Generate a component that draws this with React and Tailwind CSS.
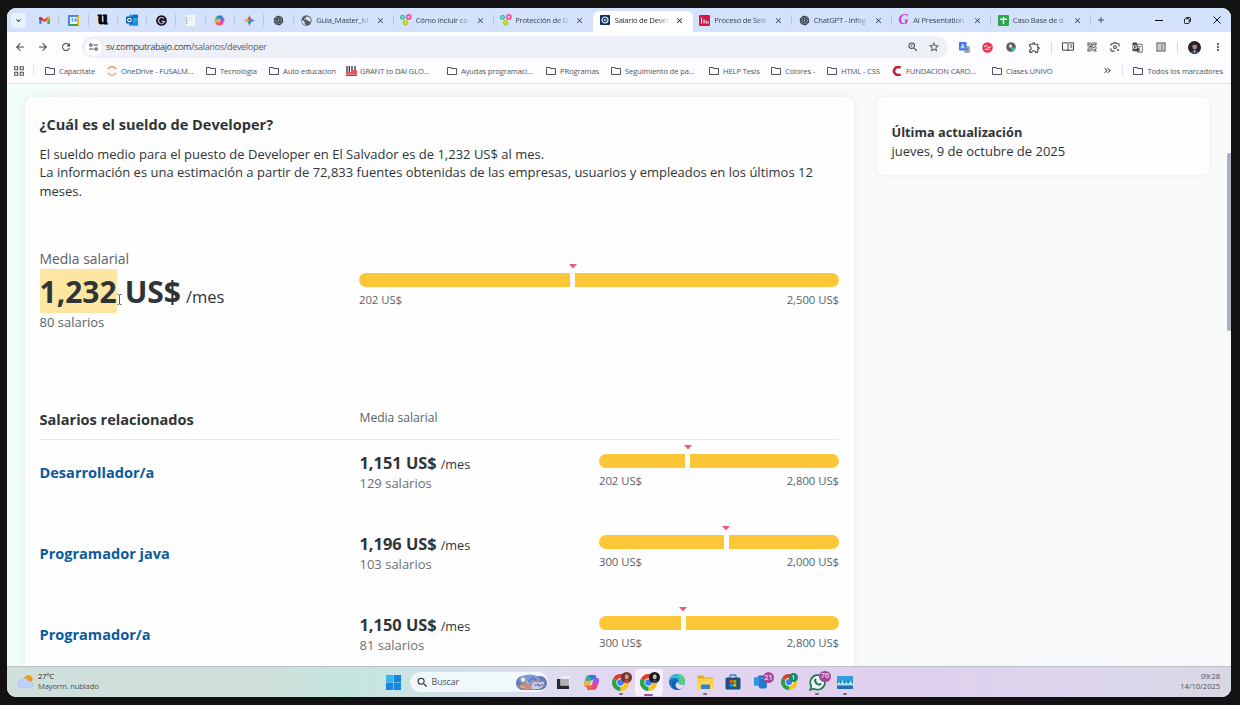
import React from "react";
import {
  MdArrowBack, MdArrowForward, MdRefresh, MdZoomIn, MdStarBorder, MdOutlineExtension,
  MdOutlineFolder, MdQrCode2, MdGTranslate, MdOutlineListAlt, MdMoreVert, MdClose, MdAdd,
  MdKeyboardArrowDown, MdKeyboardDoubleArrowRight, MdSearch,
} from "react-icons/md";
import { RiOpenaiFill } from "react-icons/ri";

/* ---------- favicons ---------- */
const Gmail = () => (
  <svg viewBox="0 0 24 18" className="h-[8px] w-[11px]">
    <path d="M0 2v14a2 2 0 0 0 2 2h3.500V6z" fill="#4285f4" />
    <path d="M24 2v14a2 2 0 0 1-2 2h-3.500V6z" fill="#34a853" />
    <path d="M2 3 12 11 22 3" fill="none" stroke="#ea4335" strokeWidth="5" />
    <path d="M18.500 4 24 2v5l-5.500 4z" fill="#fbbc04" />
    <path d="M0 2l5.500 4v5L0 7z" fill="#c5221f" />
  </svg>
);
const Calendar = () => (
  <span className="flex h-[11px] w-[11px] items-center justify-center border-2 border-t-[#4285f4] border-r-[#fbbc04] border-b-[#34a853] border-l-[#4285f4] bg-white text-[6px] font-bold leading-none tracking-[-0.3px] text-[#4285f4]">14</span>
);
const UdemyU = () => <span className="-mt-[4px] font-['Liberation_Serif',serif] text-[18px] font-bold leading-none text-black [-webkit-text-stroke:0.900px_black]">u</span>;
const Outlook = () => (
  <svg viewBox="0 0 12 12" className="h-[12px] w-[12px]">
    <rect x="3" y="0.500" width="9" height="11" rx="1" fill="#28a8ea" />
    <path d="M3 6l4.500 3L12 6v5.500H3z" fill="#1490df" />
    <path d="M7 1h5v3H7z" fill="#0b68b8" />
    <rect y="2.500" width="7" height="7" rx="0.800" fill="#0f5fa8" />
    <circle cx="3.500" cy="6" r="1.800" fill="none" stroke="#fff" strokeWidth="1.100" />
  </svg>
);
const DarkG = () => (
  <svg viewBox="0 0 12 12" className="h-[11px] w-[11px]">
    <circle cx="6" cy="6" r="5.800" fill="#15131f" />
    <path d="M8.600 3.900A3.300 3.300 0 1 0 9.200 7H6.300" fill="none" stroke="#e6b8d8" strokeWidth="1.300" />
    <path d="M4 9.300a4 4 0 0 0 5-1.500" stroke="#5a8cf0" strokeWidth="1" fill="none" />
  </svg>
);
const Doc = () => (
  <svg viewBox="0 0 10 12" className="h-[11px] w-[9px]">
    <rect width="10" height="12" fill="#f5f8fa" />
    <path d="M0 2h1.500v8H0z" fill="#a6cdb8" />
    <path d="M3 3h4M3 6h5" stroke="#d5dde4" />
  </svg>
);
const Copilot = ({ className }) => (
  <svg viewBox="0 0 16 16" className={className}>
    <path d="M6 1h4.500c1 0 1.500.7 1.800 1.700L13 5H9.500C8 5 7.600 6 7.200 7.300L5.700 12H3C.8 12 .6 10 1.200 8L2.800 3.500C3.500 1.800 4.400 1 6 1z" fill="#1f9be8" />
    <path d="M1.200 8C.6 10 .8 12 3 12h2.700l1.500-4.700.3-1.300L2 6z" fill="#f2b632" />
    <path d="M2.800 3.500 2 6h5.600C8 5.300 8.700 5 9.500 5L8 1H6c-1.600 0-2.500.8-3.200 2.500z" fill="#36b37e" />
    <path d="M6.500 1h4c1 0 1.500.7 1.800 1.700L13 5H9.500C8.500 5 8 5.500 7.600 6z" fill="#2a78e4" />
    <path d="M10 15H5.500c-1 0-1.500-.7-1.800-1.700L3 11h3.500c1.500 0 1.900-1 2.300-2.300L10.300 4H13c2.200 0 2.400 2 1.800 4l-1.600 4.500C12.500 14.200 11.600 15 10 15z" fill="#e8489a" />
    <path d="M14.800 8c.6-2 .4-4-1.800-4h-2.700L9 8z" fill="#8b5cf6" />
    <path d="M3 11h3.500c1 0 1.500-.5 1.800-1l1.500 5H5.500c-1 0-1.500-.7-1.800-1.700z" fill="#f2643d" />
  </svg>
);
const Gemini = () => (
  <svg viewBox="0 0 12 12" className="h-[11px] w-[11px]">
    <path d="M6 0c.6 3.300 2.700 5.400 6 6-3.300.6-5.400 2.700-6 6-.6-3.300-2.700-5.400-6-6 3.300-.6 5.400-2.700 6-6z" fill="#3f86f4" />
    <path d="M6 0c.3 2 1 3.300 2 4.300L6 5.500 4 4.300C5 3.300 5.700 2 6 0z" fill="#ea5146" />
    <path d="M0 6c2-.3 3.300-1 4.300-2L5.500 6 4.300 8C3.300 7 2 6.300 0 6z" fill="#e9b62d" />
    <path d="M6 12c-.3-2-1-3.300-2-4.300L5.500 7 7 8.500C6.500 9.300 6.200 10.500 6 12z" fill="#35a463" />
  </svg>
);
const Bubbles = () => (
  <svg viewBox="0 0 12 12" className="h-[12px] w-[12px]">
    <circle cx="2.500" cy="3.200" r="1.900" fill="#8fd6cc" stroke="#35b9ac" strokeWidth="1.200" />
    <circle cx="8.800" cy="2.900" r="2.200" fill="#f6b0d4" stroke="#ec4aa0" strokeWidth="1.500" />
    <circle cx="5.500" cy="8.700" r="2.500" fill="#a8cc2e" stroke="#b5d334" />
    <circle cx="5.500" cy="8.500" r="0.900" fill="#e4f0a8" />
  </svg>
);
const Computrabajo = () => (
  <svg viewBox="0 0 10 10" className="h-[10px] w-[10px]">
    <rect width="10" height="10" rx="1" fill="#0b2f63" />
    <circle cx="5" cy="5" r="3" fill="none" stroke="#e8eef6" strokeWidth="1.200" />
    <path d="M4.300 3.800v2.500M5.800 3.800v2.500" stroke="#e8eef6" strokeWidth="0.900" />
  </svg>
);
const RedBars = () => (
  <svg viewBox="0 0 11 11" className="h-[11px] w-[11px]">
    <rect width="11" height="11" rx="1" fill="#d3174c" />
    <path d="M2.500 2.500v6M5 4.500v4M7.200 5.500v3M9 6.500v2" stroke="#fff" strokeWidth="1.100" />
  </svg>
);
const PinkG = () => <span className="font-['Liberation_Serif',serif] text-[14px] font-bold italic leading-none text-[#cf36e0]">G</span>;
const Sheets = () => (
  <svg viewBox="0 0 11 11" className="h-[11px] w-[11px]">
    <rect width="11" height="11" rx="1" fill="#2da44e" />
    <path d="M2 4.200h7M5.500 2v7.200" stroke="#fff" strokeWidth="1.400" />
  </svg>
);
const Gpt = () => <RiOpenaiFill className="h-[11px] w-[11px] text-[#1f2429] [stroke-width:0.800px]" stroke="currentColor" />;
const Globe = () => (
  <svg viewBox="0 0 12 12" className="h-[11px] w-[11px]">
    <circle cx="6" cy="6" r="5.600" fill="#555b63" />
    <path d="M1.500 5.500 4 7.500v2l1.500 1.500C3 10.800 1 9 1 6.500zM6 1.500 5 3.500H3.800L3.500 5h3l1 1.500H9L10.500 8c.6-2.500 0-4.500-2-5.800z" fill="#dce6f8" />
  </svg>
);

const pinned = [Gmail, Calendar, UdemyU, Outlook, DarkG, Doc, () => <Copilot className="h-[11px] w-[11px]" />, Gemini, Gpt];
const tabs = [
  { Icon: Globe, title: "Guia_Master_M" },
  { Icon: Bubbles, title: "Cómo incluir co" },
  { Icon: Bubbles, title: "Protección de D" },
  { Icon: Computrabajo, title: "Salario de Devel", active: true },
  { Icon: RedBars, title: "Proceso de Sele" },
  { Icon: Gpt, title: "ChatGPT - Infog" },
  { Icon: PinkG, title: "AI Presentation" },
  { Icon: Sheets, title: "Caso Base de d" },
];

function TabStrip() {
  return (
    <div className="flex h-[24px] shrink-0 items-center bg-[#d4e1fb] text-[#3c4654]">
      <div className="ml-[4px] flex h-[15px] w-[15px] items-center justify-center rounded-[4px] bg-[#e8f3fb]">
        <MdKeyboardArrowDown className="h-[9px] w-[9px] text-black" />
      </div>
      <div className="ml-[4px] flex">
        {pinned.map((Icon, i) => (
          <div key={i} className="flex h-[12px] w-[29.300px] items-center justify-center border-r border-[#b9c9e4]">
            <Icon />
          </div>
        ))}
      </div>
      <div className="ml-[1px] flex h-full items-center">
        {tabs.map(({ Icon, title, active }, i) => (
          <div
            key={title}
            className={
              active
                ? "mt-[3px] flex h-[21px] w-[99.500px] items-center pb-[3px] rounded-t-[6px] bg-white pl-[6px] text-[#1f2328]"
                : "flex h-full w-[99.500px] items-center pl-[6px]"
            }
          >
            <span className="flex w-[12px] justify-center"><Icon /></span>
            <span className="ml-[3.500px] w-[57px] whitespace-nowrap text-[7.700px] leading-[12px] tracking-[-0.250px] [mask-image:linear-gradient(to_right,black_72%,transparent_98%)]">{title}</span>
            <MdClose className="ml-[3px] h-[9px] w-[9px]" />
            {!active && i !== 2 && <span className="ml-auto h-[10px] w-px bg-[#b2c3df]" />}
          </div>
        ))}
      </div>
      <MdAdd className="ml-[5px] h-[10px] w-[10px]" />
      <div className="ml-auto flex text-black">
        <span className="flex w-[29px] items-center justify-center"><span className="h-px w-[8px] bg-black" /></span>
        <span className="flex w-[29px] items-center justify-center">
          <svg viewBox="0 0 8 8" className="h-[7px] w-[7px]" fill="none" stroke="currentColor"><rect x="0.500" y="2" width="5.500" height="5.500" rx="1" /><path d="M2.500.6h3.700A1.300 1.300 0 0 1 7.500 2v3.500" /></svg>
        </span>
        <span className="flex w-[29px] items-center justify-center">
          <svg viewBox="0 0 8 8" className="h-[8px] w-[8px]" stroke="currentColor" strokeWidth="0.900"><path d="M.5.5l7 7M7.500.5l-7 7" /></svg>
        </span>
      </div>
    </div>
  );
}

const Cell = ({ children }) => <span className="flex w-[23.200px] shrink-0 items-center justify-center">{children}</span>;

function Toolbar() {
  return (
    <div className="flex h-[27px] shrink-0 items-center pt-[3px] text-[#42464c]">
      <div className="flex pl-[1px]">
        <Cell><MdArrowBack className="h-[12px] w-[12px]" /></Cell>
        <Cell><MdArrowForward className="h-[12px] w-[12px]" /></Cell>
        <Cell><MdRefresh className="h-[12px] w-[12px]" /></Cell>
      </div>
      <div className="ml-[4.500px] flex h-[22px] w-[866px] items-center rounded-full bg-[#eef0f8] pl-[3px] pr-[8px]">
        <span className="flex h-[17px] w-[17px] items-center justify-center rounded-full bg-white">
          <svg viewBox="0 0 10 9" className="h-[8px] w-[9px]" fill="none" stroke="currentColor" strokeWidth="1.200"><circle cx="2" cy="2.200" r="1.400" /><path d="M5 2.200h5M0 6.800h5" /><circle cx="8" cy="6.800" r="1.400" /></svg>
        </span>
        <span className="ml-[4px] text-[9px] leading-[14px] tracking-[-0.300px] text-[#3a3f46]">sv.computrabajo.com<span className="text-[#5b6068]">/salarios/developer</span></span>
        <div className="ml-auto flex gap-[9px]">
          <MdZoomIn className="h-[12px] w-[12px]" />
          <MdStarBorder className="h-[12px] w-[12px]" />
        </div>
      </div>
      <div className="ml-[5px] flex items-center">
        <Cell>
          <svg viewBox="0 0 11 11" className="h-[11px] w-[11px]"><rect x="5" y="4" width="6" height="7" rx="1" fill="#a9b0b8" /><rect width="7.500" height="8.500" rx="1" fill="#4079e8" /><path d="M2 6.500 3.700 2l1.700 4.500M2.600 5h2.200" stroke="#fff" fill="none" strokeWidth="0.900" /><path d="M7 7h3M8.500 6v4" stroke="#6f7780" strokeWidth="0.700" /></svg>
        </Cell>
        <Cell>
          <svg viewBox="0 0 11 11" className="h-[11px] w-[11px]"><circle cx="5.500" cy="5.500" r="5.300" fill="#ef3558" /><path d="M2 5.200c1.300-2 2.600-2 3.500-.5s2.400 1.300 3.500-.4M3 7.300h4.500" stroke="#fff" fill="none" /></svg>
        </Cell>
        <Cell>
          <svg viewBox="0 0 11 11" className="h-[10px] w-[10px]"><circle cx="5.500" cy="5.500" r="5.300" fill="#5c6266" /><path d="M5.500 5.500 10.500 7A5.300 5.300 0 0 1 7 10.500z" fill="#42c6a0" /><circle cx="5" cy="4.500" r="1.700" fill="#e4ecec" /></svg>
        </Cell>
        <Cell><MdOutlineExtension className="h-[13px] w-[13px]" /></Cell>
        <span className="mx-[5px] h-[11px] w-px bg-[#c9d9ef]" />
        <Cell>
          <svg viewBox="0 0 12 10" className="h-[10px] w-[12px]" fill="none" stroke="currentColor" strokeWidth="1"><path d="M.5.8h5l.5.6.5-.6h5v7.400h-5L6 9l-.5-.8h-5zM6 1.500V9M8 3h2.300M8 5h2.300" /></svg>
        </Cell>
        <Cell><MdQrCode2 className="h-[12px] w-[12px]" /></Cell>
        <Cell>
          <svg viewBox="0 0 11 11" className="h-[10px] w-[10px]" fill="none" stroke="currentColor" strokeWidth="1.200"><path d="M1 4V3q0-1 1-1h1.300L4 1h3l.7 1H9q1 0 1 1v2M1 7v2q0 1 1 1h3" /><circle cx="5.500" cy="5.700" r="1.500" /><circle cx="8.800" cy="8.800" r="0.500" /></svg>
        </Cell>
        <Cell><MdGTranslate className="h-[11px] w-[11px]" /></Cell>
        <Cell><MdOutlineListAlt className="h-[12px] w-[12px]" /></Cell>
        <span className="mx-[4.500px] h-[11px] w-px bg-[#c9d9ef]" />
        <Cell>
          <svg viewBox="0 0 12 12" className="h-[13px] w-[13px]"><circle cx="6" cy="6" r="6" fill="#24222d" /><ellipse cx="6.200" cy="5" rx="2.100" ry="2.600" fill="#b58a72" /><path d="M3.800 4c.3-2.600 4.500-2.600 4.800 0l-1-.6H5z" fill="#17151c" /><path d="M2.500 10.500c1-2.500 6-2.500 7 0a6 6 0 0 1-7 0z" fill="#3f4c78" /><path d="M5.500 8.500h1.400L6.200 11z" fill="#dfe2ea" /></svg>
        </Cell>
        <Cell><MdMoreVert className="h-[12px] w-[12px]" /></Cell>
      </div>
    </div>
  );
}

const Folder = () => <MdOutlineFolder className="h-[12px] w-[12px] shrink-0" />;
const Ring = () => (
  <svg viewBox="0 0 11 11" className="h-[10px] w-[12px] shrink-0" fill="none" stroke="#e8873a" strokeWidth="1.400"><path d="M1.200 3.500a4.700 4.700 0 0 1 8.600 0" /><path d="M1.200 7.500a4.700 4.700 0 0 0 8.600 0" stroke="#d8a06a" /></svg>
);
const Grant = () => (
  <svg viewBox="0 0 11 10" className="h-[10px] w-[11px] shrink-0"><path d="M1 0v6M3.300 0v6M6 0v4M9 0v4" stroke="#273044" strokeWidth="1.300" /><path d="M5 5h6M0 7h11M0 9.200h11" stroke="#d8222e" strokeWidth="1.400" /></svg>
);
const Carolina = () => (
  <svg viewBox="0 0 10 10" className="h-[10px] w-[12px] shrink-0"><path d="M8.500 1.800A4 4 0 1 0 8.500 8.200" fill="none" stroke="#b8283a" strokeWidth="2.600" /></svg>
);

const bookmarks = [
  { Icon: Folder, label: "Capacitate", w: "w-[62px]" },
  { Icon: Ring, label: "OneDrive - FUSALM...", w: "w-[99px]" },
  { Icon: Folder, label: "Tecnologia", w: "w-[63px]" },
  { Icon: Folder, label: "Auto educacion", w: "w-[78px]" },
  { Icon: Grant, label: "GRANT to DAI GLO...", w: "w-[100px]" },
  { Icon: Folder, label: "Ayudas programaci...", w: "w-[99px]" },
  { Icon: Folder, label: "PRogramas", w: "w-[65px]" },
  { Icon: Folder, label: "Seguimiento de pa...", w: "w-[98px]" },
  { Icon: Folder, label: "HELP Tesis", w: "w-[62px]" },
  { Icon: Folder, label: "Colores -", w: "w-[56px]" },
  { Icon: Folder, label: "HTML - CSS", w: "w-[65px]" },
  { Icon: Carolina, label: "FUNDACION CARO...", w: "w-[100px]" },
  { Icon: Folder, label: "Clases UNIVO", w: "w-[80px]" },
];

function Bookmarks() {
  return (
    <div className="flex h-[25px] shrink-0 items-center border-b border-[#e2e4e9] pb-px text-[7.600px] leading-[12px] tracking-[-0.130px] text-[#50555c]">
      <svg viewBox="0 0 10 10" className="ml-[7px] h-[10px] w-[10px]" fill="none" stroke="currentColor" strokeWidth="1.100"><path d="M.7.700h3v3h-3zM6.300.700h3v3h-3zM.7 6.300h3v3h-3zM6.300 6.300h3v3h-3z" /></svg>
      <span className="ml-[9px] mr-[9.500px] h-[11px] w-px bg-[#dce3ee]" />
      {bookmarks.map(({ Icon, label, w }) => (
        <span key={label} className={"flex shrink-0 items-center gap-[3.500px] whitespace-nowrap " + w}>
          <Icon />
          {label}
        </span>
      ))}
      <MdKeyboardDoubleArrowRight className="ml-auto h-[11px] w-[11px]" />
      <span className="mx-[9px] h-[11px] w-px bg-[#dce3ee]" />
      <span className="mr-[8px] flex items-center gap-[3.500px] whitespace-nowrap"><Folder />Todos los marcadores</span>
    </div>
  );
}

/* ---------- page ---------- */
function Range({ min, max, at, className }) {
  return (
    <div className={className}>
      <div className="flex h-[5px]">
        <svg viewBox="0 0 8 5" className="h-[5px] w-[8px] -translate-x-1/2" style={{ marginLeft: at }}>
          <path d="M0 0h8L4 4.500z" fill="#e8588a" />
        </svg>
      </div>
      <div className="mt-[4px] flex h-[14px] gap-[5px]">
        <div className="rounded-l-full bg-[#fbc638]" style={{ width: `calc(${at} - 2.5px)` }} />
        <div className="flex-1 rounded-r-full bg-[#fbc638]" />
      </div>
      <div className="mt-[4px] flex justify-between text-[11.400px] leading-[17px] tracking-[-0.080px] text-[#5a6268]">
        <span>{min} US$</span>
        <span>{max} US$</span>
      </div>
    </div>
  );
}

const related = [
  { name: "Desarrollador/a", pay: "1,151", count: 129, min: "202", max: "2,800", at: "37%" },
  { name: "Programador java", pay: "1,196", count: 103, min: "300", max: "2,000", at: "53%" },
  { name: "Programador/a", pay: "1,150", count: 81, min: "300", max: "2,800", at: "35%" },
];

function SalaryCard() {
  return (
    <section className="ml-[18px] mt-[13px] h-[620px] w-[829px] shrink-0 rounded-[8px] bg-[#fefefe] pl-[14.500px] pr-[15px] shadow-[0_0_8px_rgba(60,60,110,0.08)]">
      <h1 className="pt-[17px] text-[14.550px] font-bold leading-[20px]">¿Cuál es el sueldo de Developer?</h1>
      <p className="mt-[10.500px] whitespace-nowrap text-[13px] leading-[18.700px]">
        El sueldo medio para el puesto de Developer en El Salvador es de 1,232 US$ al mes.<br />
        La información es una estimación a partir de 72,833 fuentes obtenidas de las empresas, usuarios y empleados en los últimos 12<br />
        meses.
      </p>
      <div className="mt-[48.500px] flex h-[82px]">
        <div className="w-[320px]">
          <div className="text-[13.900px] leading-[20px] text-[#5a6268]">Media salarial</div>
          <div className="flex h-[44px] items-baseline leading-[45px]">
            <span className="relative h-[44px] bg-[#fde6a1] text-[30px] font-bold">1,232
              <svg viewBox="0 0 5 11" className="absolute -right-[5px] top-[25px] h-[11px] w-[5px]" fill="none" stroke="#333" strokeWidth="0.800"><path d="M.5.5h1.300l.7.700.7-.7h1.300M2.500 1v9M.5 10.500h1.300l.7-.7.7.700h1.300" /></svg>
            </span>
            <span className="ml-[8px] text-[30px] font-bold">US$</span>
            <span className="ml-[5px] text-[16.500px]">/mes</span>
          </div>
          <div className="text-[13px] leading-[18px] text-[#5a6268]">80 salarios</div>
        </div>
        <Range min="202" max="2,500" at="44.5%" className="-ml-[0.500px] w-[480px] pt-[15px]" />
      </div>
      <div className="mt-[69px] flex h-[40px] items-center border-b border-[#e6e8ea]">
        <h2 className="w-[320px] pb-px text-[14.550px] font-bold leading-[20px]">Salarios relacionados</h2>
        <span className="pb-[4px] text-[12.100px] leading-[18px] text-[#5a6268]">Media salarial</span>
      </div>
      {related.map((r) => (
        <div key={r.name} className="flex h-[81.200px] pt-[5px]">
          <div className="w-[320px] pt-[17px] text-[14.550px] font-bold leading-[20px] text-[#0a5a9c]">{r.name}</div>
          <div className="w-[239.500px] pt-[7.500px]">
            <div className="leading-[20px]"><span className="text-[16.400px] font-bold">{r.pay} US$</span><span className="ml-[4px] text-[12.700px]">/mes</span></div>
            <div className="text-[13px] leading-[19px] text-[#687076]">{r.count} salarios</div>
          </div>
          <Range min={r.min} max={r.max} at={r.at} className="w-[240px]" />
        </div>
      ))}
    </section>
  );
}

function Page() {
  return (
    <main className="flex min-h-0 flex-1 overflow-hidden bg-[linear-gradient(to_right,#f0fdfb_0,#f8f9fb_90px)] text-[#2f3437]">
      <SalaryCard />
      <aside className="ml-[23px] mt-[13px] h-[78px] w-[332px] rounded-[7px] bg-[#fefefe] pl-[14.500px] pt-[26px] text-[13px] leading-[19px] shadow-[0_0_6px_rgba(60,60,110,0.06)]">
        <div className="text-[12.750px] font-bold">Última actualización</div>
        <div>jueves, 9 de octubre de 2025</div>
      </aside>
      <div className="ml-auto mt-[69px] h-[178px] w-[4px] rounded-l-[2px] bg-[#a9b1c0]" />
    </main>
  );
}

/* ---------- taskbar ---------- */
const Chrome = ({ className = "h-[17px] w-[17px]" }) => (
  <svg viewBox="0 0 18 18" className={className}>
    <path d="M9 9 1.200 4.500A9 9 0 0 1 16.800 4.500z" fill="#e33b2e" />
    <path d="M9 9 16.800 4.500A9 9 0 0 1 9 18z" fill="#fbc116" />
    <path d="M9 9v9A9 9 0 0 1 1.200 4.500z" fill="#2da04a" />
    <circle cx="9" cy="9" r="4.400" fill="#fff" />
    <circle cx="9" cy="9" r="3.500" fill="#3b7ded" />
  </svg>
);
const Face = ({ dark }) => (
  <svg viewBox="0 0 10 10" className="absolute -right-[3px] -top-[2px] h-[11px] w-[11px]">
    <circle cx="5" cy="5" r="5" fill={dark ? "#17161b" : "#6b3a35"} />
    <ellipse cx="5.200" cy="4.300" rx="1.800" ry="2.300" fill={dark ? "#cbb9ae" : "#d69b83"} />
    <path d="M2.500 9c1-2.500 4.500-2.500 5.500 0a5 5 0 0 1-5.500 0z" fill={dark ? "#3a4664" : "#c84848"} />
  </svg>
);
const Badge = ({ children }) => (
  <span className="absolute -right-[5px] -top-[3px] flex h-[11px] min-w-[11px] items-center justify-center rounded-full bg-[#a4499c] px-[1.500px] text-[7.500px] leading-none text-white">{children}</span>
);
const Slot = ({ children, mark, active }) => (
  <span className={active ? "relative flex h-[27px] w-[28.100px] items-center justify-center rounded-[4px] bg-[#f6f0fb]" : "relative flex h-[27px] w-[28.100px] items-center justify-center"}>
    <span className="relative flex">{children}</span>
    {mark && <span className={active ? "absolute bottom-0 h-[2px] w-[9px] rounded-full bg-[#a4499c]" : "absolute bottom-px h-[1.500px] w-[4px] rounded-full bg-[#74707c]"} />}
  </span>
);

function Taskbar() {
  return (
    <footer className="flex h-[31px] shrink-0 items-center border-t border-[#b9c0c6] bg-[linear-gradient(to_right,#cfe0dc_0%,#cfe0dc_22%,#c5e6df_27%,#cfe0e6_36%,#dddcf0_43%,#e3d7f1_52%,#dfd0ee_72%,#dcd6ec_90%,#d8d8e2_100%)] text-[7.700px] leading-[10px] text-[#4a5055]">
      <div className="flex w-[372px] items-center pb-[2px] pl-[10px] tracking-[-0.200px]">
        <svg viewBox="0 0 18 16" className="h-[15px] w-[17px]">
          <circle cx="12" cy="5.500" r="4.500" fill="#f39a1e" />
          <path d="M4 14.500a3.500 3.500 0 0 1-.3-7A4.700 4.700 0 0 1 12.500 8a3.300 3.300 0 0 1 2 6.500z" fill="#c0d1f7" stroke="#9bb3ea" strokeWidth="0.500" />
        </svg>
        <div className="ml-[4px]">
          <div className="text-[#1d2226]">27°C</div>
          <div>Mayorm. nublado</div>
        </div>
      </div>
      <Slot>
        <svg viewBox="0 0 15 15" className="h-[15px] w-[15px]"><path d="M0 0h7.200v7.200H0zM7.800 0H15v7.200H7.800zM0 7.800h7.200V15H0zM7.800 7.800H15V15H7.800z" fill="#1687dc" /><path d="M0 0h7.200v7.200H0z" fill="#35b5ee" /></svg>
      </Slot>
      <div className="ml-[2.500px] mr-[1.500px] flex h-[20px] w-[138px] shrink-0 items-center rounded-full bg-[#f1f8fa] pl-[6px]">
        <MdSearch className="h-[13px] w-[13px] text-[#2b2f34]" />
        <span className="ml-[3px] text-[8.800px] tracking-[-0.100px]">Buscar</span>
        <svg viewBox="0 0 34 18" className="ml-auto h-[17px] w-[33px]">
          <rect x="0.500" y="2" width="33" height="15" rx="7.500" fill="#6b7bb3" />
          <ellipse cx="15" cy="6" rx="11" ry="5.500" fill="#7c9ad8" />
          <circle cx="8" cy="6" r="2.200" fill="#f4f1f8" />
          <path d="M3 13l6-4 7 3 5-6 5 2-2 8-13 1z" fill="#c58c83" />
          <path d="M17 14c0-5 3-6 6-5s6-3 7 0-3 7-6 7-7 1-7-2z" fill="#c7cde3" />
          <path d="M14 8l4-4 4 3M20 12l5-1M24 13l5-2" stroke="#46518c" fill="none" />
          <path d="M5 13l5 2M11 7l3 4" stroke="#e5b36e" strokeWidth="1.500" />
        </svg>
      </div>
      <Slot>
        <svg viewBox="0 0 13 13" className="h-[13px] w-[13px]"><path d="M4 0h9v9H4z" fill="#efeaf5" /><path d="M0 3h3.500v6.500H12V13H0z" fill="#28292e" /><path d="M3.500 3H12v6.500H3.500z" fill="#b3b1b9" /></svg>
      </Slot>
      <span className="flex w-[29.500px] items-center justify-center"><Copilot className="h-[17px] w-[17px]" /></span>
      <Slot mark><Chrome /><Face /></Slot>
      <Slot mark active><Chrome /><Face dark /></Slot>
      <Slot>
        <svg viewBox="0 0 16 16" className="h-[16px] w-[16px]"><circle cx="8" cy="8" r="8" fill="#1672c4" /><path d="M0 7.500C.5 3 4 0 8.200 0 13 0 16 3.500 16 7c0 3-2.500 4-4.500 4-1.600 0-2.500-.6-2.500-1.100 0-.7.9-.9.900-2.300C9.900 5.500 8 4 5.500 4 3 4 1 5.500 0 7.500z" fill="#37b9d0" /><path d="M8.200 0C13 0 16 3.500 16 7c0 3-2.500 4-4.500 4-1.600 0-2.500-.6-2.500-1.100 0-.7.9-.9.900-2.300C11 5 11 2 8.200 0z" fill="#5fcf76" /><path d="M9.900 7.600C8.800 9 8.500 10.300 11.500 11c1.500.1 3-.3 4-1.200L14.500 12.800C13 14.500 11.500 15.300 9.500 15 6 14 5.200 9 9.900 7.600z" fill="#e6ddf3" /><path d="M9 7.200C6.500 7 5 9 5.500 11.500 6 14 8.500 15.500 11 15.300 5 17 1 12 4 8 5.500 6.500 8 6.300 9 7.200z" fill="#0f5cae" /></svg>
      </Slot>
      <Slot mark>
        <svg viewBox="0 0 17 15" className="h-[15px] w-[17px]"><path d="M.5 1.500q0-1 1-1h4.500l2 2H16V8H.5z" fill="#eda51e" /><rect x="0.500" y="3.500" width="16" height="10.500" rx="1" fill="#ffd24d" /><path d="M4 10.500q0-1 1-1h7q1 0 1 1V14H4z" fill="#2b82d9" /></svg>
      </Slot>
      <Slot>
        <svg viewBox="0 0 16 16" className="h-[16px] w-[16px]"><path d="M5 4V2q0-1 1-1h4q1 0 1 1v2" fill="none" stroke="#2c7fc0" strokeWidth="1.300" /><rect x="0.500" y="3.500" width="15" height="12" rx="1.500" fill="#1b4f80" /><path d="M4.700 6h3v3h-3z" fill="#f25022" /><path d="M8.300 6h3v3h-3z" fill="#7fba00" /><path d="M4.700 9.600h3v3h-3z" fill="#00a4ef" /><path d="M8.300 9.600h3v3h-3z" fill="#ffb900" /></svg>
      </Slot>
      <Slot>
        <svg viewBox="0 0 16 15" className="h-[14px] w-[16px]"><rect x="5" y="0.500" width="9" height="12" rx="1.200" fill="#1769bd" /><rect x="0.500" y="2.500" width="11" height="9" rx="1" fill="#2f93e0" /><rect x="6" y="4" width="8" height="10.500" rx="1.200" fill="#1c7ed2" /></svg>
        <Badge>21</Badge>
      </Slot>
      <Slot>
        <Chrome className="h-[16px] w-[16px]" />
        <svg viewBox="0 0 10 10" className="absolute -right-px -top-px h-[9px] w-[9px]"><circle cx="5" cy="5" r="5" fill="#17896f" /><path d="M5 2.500v5M3.800 4 5 2.700" stroke="#d9f3ea" /></svg>
      </Slot>
      <Slot mark>
        <svg viewBox="0 0 17 17" className="h-[17px] w-[17px]"><path d="M1.200 15.800 2.300 12A7.300 7.300 0 1 1 5 14.700z" fill="#eef6f2" stroke="#23765b" strokeWidth="1.700" /><path d="M5.500 5c.8-1.200 1.700-.4 2.100.8.2.6-.6.9-.5 1.300.6 1.200 1.400 2 2.700 2.600.5.100.8-1 1.400-.8 1.300.5 1.600.8 1.200 1.700-.6 1.100-2 1.400-3.800.6C6.500 10.200 4 7.500 5.500 5z" fill="#23765b" /></svg>
        <Badge>76</Badge>
      </Slot>
      <Slot mark>
        <svg viewBox="0 0 16 13" className="h-[13px] w-[16px]"><rect width="16" height="13" rx="0.800" fill="#1d6fae" /><path d="M0 0h16v5H0z" fill="#2fa0dd" /><path d="M0 8l2-3 1.500 3L5.500 4l2 4L9.500 5l1.500 3 2.500-3.500L16 8v1.500H0z" fill="#a6e3f8" /></svg>
      </Slot>
      <div className="ml-auto pb-[2px] pr-[11px] text-right text-[7.500px]">
        <div>09:28</div>
        <div>14/10/2025</div>
      </div>
    </footer>
  );
}

export default function App() {
  return (
    <div className="h-[705px] w-[1240px] overflow-hidden bg-[#121212] pl-[7px] pt-[8px] font-['Open_Sans','Noto_Sans',sans-serif]">
      <div className="flex h-[689px] w-[1224px] flex-col overflow-hidden rounded-[9px] bg-[#fdfdff]">
        <TabStrip />
        <Toolbar />
        <Bookmarks />
        <Page />
        <Taskbar />
      </div>
    </div>
  );
}
